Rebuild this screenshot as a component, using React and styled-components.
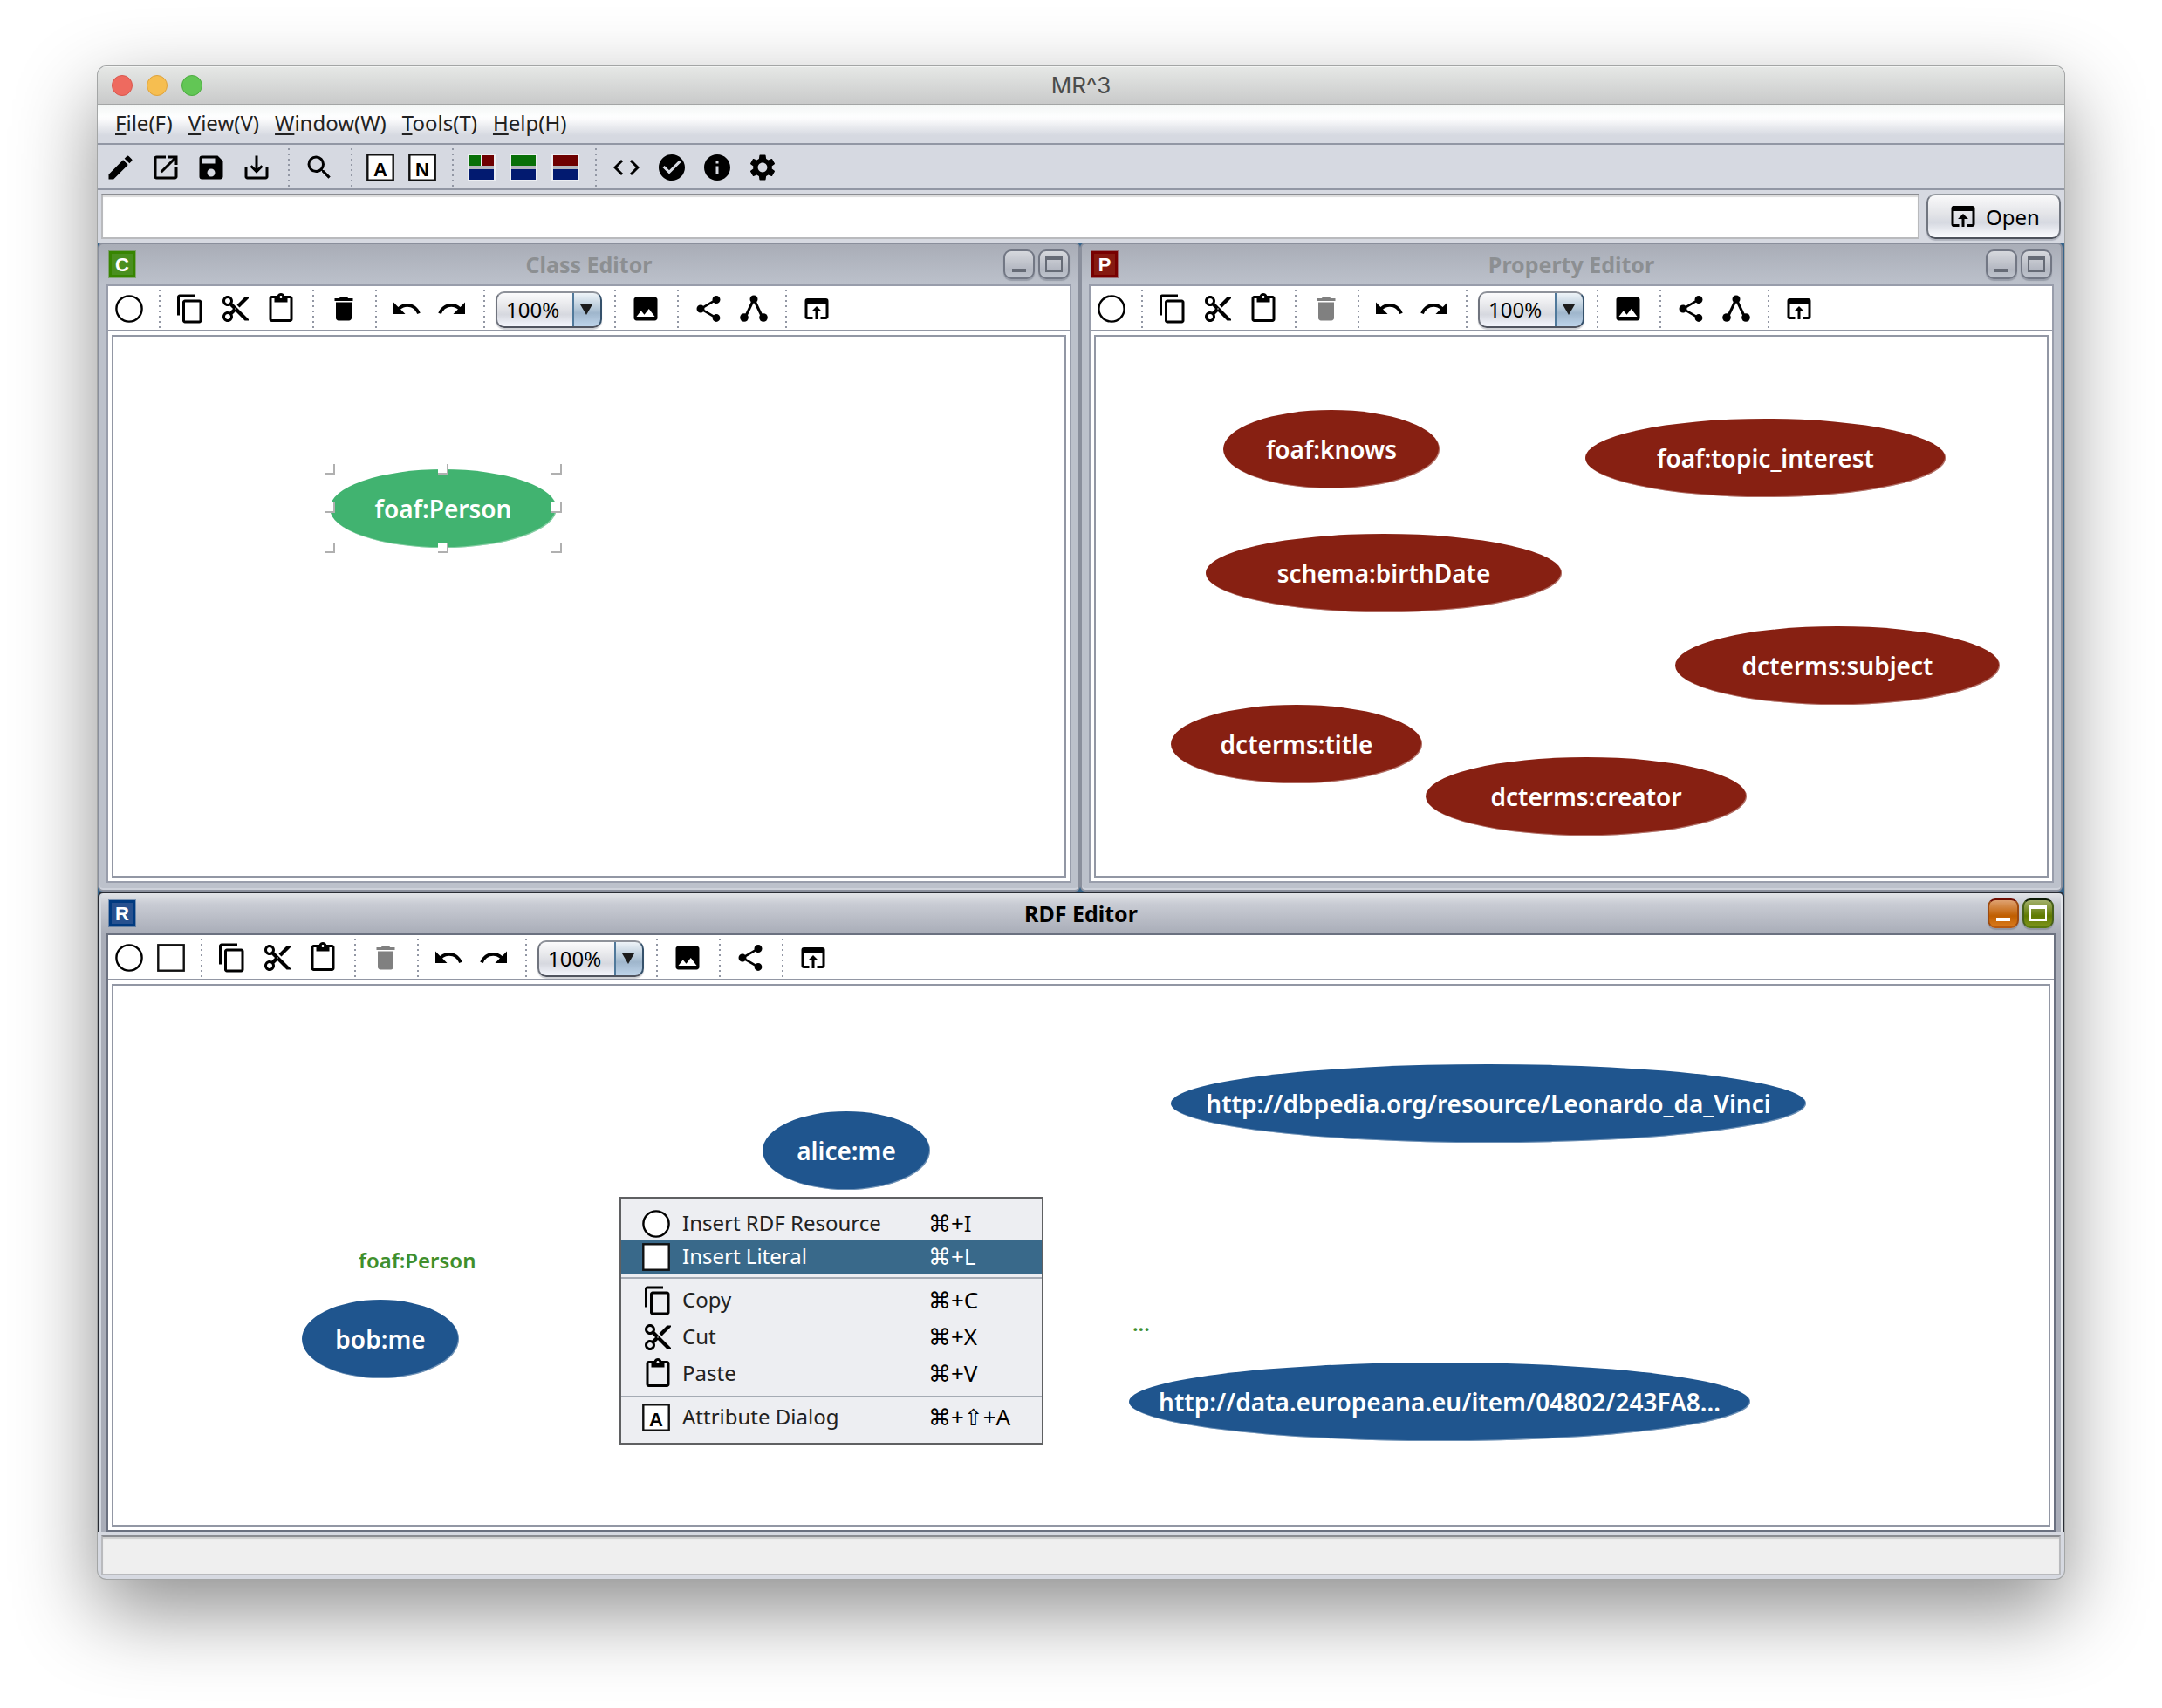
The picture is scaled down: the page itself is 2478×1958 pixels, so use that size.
import React from "react";
import styled, { createGlobalStyle, css } from "styled-components";
import {
  MdCheckCircle,
  MdCode,
  MdContentCopy,
  MdContentCut,
  MdContentPaste,
  MdDelete,
  MdEdit,
  MdImage,
  MdInfo,
  MdOpenInBrowser,
  MdOpenInNew,
  MdRedo,
  MdSave,
  MdSaveAlt,
  MdSearch,
  MdSettings,
  MdShare,
  MdUndo,
} from "react-icons/md";

const uiFont = '"Noto Sans", "Open Sans", "DejaVu Sans", sans-serif';
const line = "#9297a4";
const panel = "#d6d9e1";

const GlobalStyle = createGlobalStyle`
  *, *::before, *::after { box-sizing: border-box; }
  body { margin: 0; background: #fff; font-family: ${uiFont}; font-size: 24px; color: #000; }
  button, input, select { font: inherit; color: inherit; margin: 0; }
`;

const Page = styled.div`
  min-height: 100vh;
  padding: 76px 112px 148px;
  display: flex;
`;

const AppWindow = styled.main`
  flex: 1;
  min-width: 0;
  display: flex;
  flex-direction: column;
  background: ${panel};
  border-radius: 10px;
  overflow: hidden;
  box-shadow: 0 0 0 1px #a3a5a5, 0 36px 94px rgba(0, 0, 0, 0.45);
`;

const TitleBar = styled.header`
  height: 44px;
  flex: none;
  display: grid;
  grid-template-columns: 1fr auto 1fr;
  align-items: center;
  padding: 0 16px;
  background: linear-gradient(#e6e8e6, #c9caca);
  border-bottom: 1px solid #a3a5a5;
  box-shadow: inset 0 1px 0 #f3f4f3;
`;

const Lights = styled.div`
  display: flex;
  gap: 16px;
`;

const Light = styled.button`
  width: 24px;
  height: 24px;
  padding: 0;
  border-radius: 50%;
  border: 1px solid ${(p) => p.$edge};
  background: ${(p) => p.$fill};
`;

const AppTitle = styled.h1`
  margin: 0;
  font: 400 26px/32px Inter, Roboto, sans-serif;
  color: #4a4c4c;
`;

const MenuBar = styled.nav`
  height: 46px;
  flex: none;
  display: flex;
  align-items: center;
  gap: 18px;
  padding: 0 20px 2px;
  border-bottom: 2px solid ${line};
  background: linear-gradient(#f3f6f5, #fdfefe 30%, #fbfbfc 38%, ${panel} 80%);
`;

const MenuTitle = styled.button`
  padding: 0;
  border: 0;
  background: none;
  line-height: 32px;
  color: #222;

  u {
    text-underline-offset: 3px;
    text-decoration-thickness: 2px;
  }
`;

const ToolBar = styled.div`
  flex: none;
  height: 52px;
  display: flex;
  align-items: center;
  padding-top: 2px;
  border-bottom: 2px solid ${line};
  background: ${(p) => (p.$plain ? "#fff" : panel)};
`;

const ToolButton = styled.button`
  flex: none;
  height: 48px;
  padding: 0 8px;
  display: flex;
  align-items: center;
  border: 0;
  background: none;
  color: #000;

  &:disabled {
    color: #808080;
  }
`;

const Separator = styled.span`
  flex: none;
  width: 20px;
  height: 44px;
  background: repeating-linear-gradient(${line} 0 2px, transparent 2px 6px) 10px 0 / 2px 100% no-repeat;
`;

const ZoomBox = styled.label`
  flex: none;
  position: relative;
  margin: 2px 4px 0;
  width: 122px;
  height: 42px;
  border-radius: 10px;
  border: 2px solid;
  border-color: #8e929a #35516b #50545f #70747e;
  background:
    linear-gradient(#50799b, #50799b) 86px 0 / 2px 100% no-repeat,
    linear-gradient(#eef4f8, #b6c9d9 45%, #9fb6cc 60%, #bed4ea) 88px 0 / 32px 100% no-repeat,
    linear-gradient(#fbfbfc, #e3e4e8 45%, #d6d8df 65%, #f4f6fd);
  box-shadow: 0 2px 1px rgba(120, 125, 140, 0.35);

  svg {
    position: absolute;
    right: 9px;
    top: 12px;
    pointer-events: none;
  }
`;

const ZoomSelect = styled.select`
  appearance: none;
  width: 100%;
  height: 100%;
  padding: 0 0 0 10px;
  border: 0;
  background: none;
  line-height: 36px;
`;

const LocationBar = styled.form`
  height: 60px;
  flex: none;
  display: flex;
  gap: 8px;
  padding: 4px;
`;

const LocationField = styled.input`
  flex: 1;
  min-width: 0;
  padding: 0 8px;
  border: 2px solid #b9babd;
  border-top-color: #8b8d92;
  background: #fff;
  box-shadow: inset 0 2px 1px #dcdcdc;
`;

const OpenButton = styled.button`
  width: 154px;
  display: flex;
  align-items: center;
  justify-content: center;
  gap: 8px;
  padding: 0;
  border: 2px solid;
  border-color: #959aa0 #70757f #4d525c #70757f;
  border-radius: 10px;
  background: linear-gradient(#f9f9fa, #e3e4e8 45%, #d6d9e1 65%, #fbfcff);
  box-shadow: 0 2px 1px rgba(120, 125, 140, 0.4);
`;

const Desktop = styled.div`
  flex: 1;
  display: grid;
  grid-template-columns: 1fr 1fr;
  grid-template-rows: auto auto;
  background: #37648a;
`;

const TopFrames = styled.div`
  grid-column: 1 / -1;
  display: grid;
  grid-template-columns: 1fr 1fr;
  padding-right: 2px;
`;

const Frame = styled.section`
  display: flex;
  flex-direction: column;
  min-width: 0;
  padding: 0 8px 8px;
  border: 2px solid #8a8f9c;
  border-radius: 6px;
  background: linear-gradient(#a9adb7, #bcc1cb 46px);
  box-shadow: inset 0 -2px 0 #cdd1da;

  ${(p) =>
    p.$active &&
    css`
      grid-column: 1 / -1;
      padding-bottom: 0;
      border-color: #282b33;
      border-bottom: 0;
      border-radius: 6px 6px 0 0;
      background: linear-gradient(#e2e4e8, #c9ccd4 12px, #a9adb8 46px);
      box-shadow: inset 2px 0 0 #d3d8e0, inset -2px 0 0 #e3e6ea;
    `}
`;

const FrameHeader = styled.header`
  height: 46px;
  flex: none;
  display: grid;
  grid-template-columns: 1fr auto 1fr;
  align-items: center;
  padding: 0 2px;
`;

const FrameTitle = styled.h2`
  margin: 0;
  font-size: 25px;
  font-weight: 700;
  line-height: 32px;
  color: ${(p) => (p.$active ? "#000" : "#8c8f92")};
`;

const FrameControls = styled.div`
  display: flex;
  justify-content: flex-end;
  gap: 4px;
`;

const FrameControl = styled.button`
  width: 36px;
  height: 34px;
  padding: 0;
  display: flex;
  align-items: center;
  justify-content: center;
  border: 2px solid;
  border-color: ${(p) => p.$edge};
  border-radius: 9px;
  background: ${(p) => p.$fill};
  color: ${(p) => p.$ink};
  box-shadow: 0 2px 1px rgba(90, 95, 110, 0.35);
`;

const FrameBody = styled.div`
  flex: 1;
  display: flex;
  flex-direction: column;
  border: 2px solid ${(p) => (p.$active ? "#6b7180" : "#989dab")};
  background: #fff;
`;

const Canvas = styled.div`
  position: relative;
  flex: 1;
  min-height: 622px;
  margin: 4px;
  border: 2px solid ${line};
  overflow: hidden;
`;

const Node = styled.div`
  position: absolute;
  left: ${(p) => p.$x}px;
  top: ${(p) => p.$y}px;
  width: ${(p) => p.$w}px;
  height: 90px;
  display: flex;
  align-items: center;
  justify-content: center;
  border-radius: 50%;
  background: ${(p) => p.$fill};
  box-shadow: inset -1px -1px 0 rgba(255, 255, 255, 0.35);
  color: #fff;
  font-size: 28px;
  font-weight: 600;
  line-height: 38px;
  white-space: nowrap;
`;

const Handle = styled.span`
  position: absolute;
  left: ${(p) => p.$x}px;
  top: ${(p) => p.$y}px;
  width: 12px;
  height: 12px;
  background: #fff;
  border: solid #b0b0b0;
  border-width: 0 2px 2px 0;
`;

const TypeLabel = styled.span`
  position: absolute;
  left: ${(p) => p.$x}px;
  top: ${(p) => p.$y}px;
  font-size: 24px;
  font-weight: 600;
  line-height: 32px;
  color: #3f8f2c;
`;

const ContextMenu = styled.div`
  position: absolute;
  left: 580px;
  top: 242px;
  width: 486px;
  padding: 10px 0;
  border: 2px solid #5f6062;
  background: #edeef2;
`;

const MenuItem = styled.button`
  width: 100%;
  height: ${(p) => (p.$tall ? 42 : 38)}px;
  padding: 0 24px;
  display: grid;
  grid-template-columns: 46px 282px 1fr;
  align-items: center;
  border: 0;
  background: ${(p) => (p.$selected ? "#39698a" : "none")};
  color: ${(p) => (p.$selected ? "#fff" : "#222")};
  text-align: left;
  line-height: 32px;

  svg {
    color: #000;
  }
`;

const MenuLabel = styled.span`
  padding-bottom: 2px;
`;

const Shortcut = styled.kbd`
  padding-bottom: 2px;
  font: 400 26px/32px "Noto Sans", "DejaVu Sans", sans-serif;
  white-space: nowrap;
  color: ${(p) => (p.$selected ? "#fff" : "#000")};
`;

const MenuRule = styled.hr`
  height: 2px;
  margin: 4px 0;
  border: 0;
  background: #a5abb4;
`;

const StatusBar = styled.footer`
  flex: none;
  padding: 4px;
`;

const StatusField = styled.input`
  display: block;
  width: 100%;
  height: 46px;
  padding: 0 8px;
  border: 2px solid #b9babd;
  border-top-color: #8b8d92;
  background: #efefef;
  box-shadow: inset 0 2px 1px #cfcfcf;
`;

const CircleIcon = () => (
  <svg width="32" height="32" viewBox="0 0 32 32" aria-hidden="true">
    <circle cx="16" cy="16" r="14.6" fill="#fff" stroke="#000" strokeWidth="2.4" />
  </svg>
);

const BoxIcon = ({ letter }) => (
  <svg width="32" height="32" viewBox="0 0 32 32" aria-hidden="true">
    <rect x="1.3" y="1.3" width="29.4" height="29.4" fill="#fff" stroke="#111" strokeWidth="2.4" />
    {letter && (
      <text x="16" y="26" textAnchor="middle" fontFamily='"Liberation Sans", Arial, sans-serif' fontWeight="700" fontSize="22">
        {letter}
      </text>
    )}
  </svg>
);

const TreeIcon = () => (
  <svg width="36" height="36" viewBox="0 0 36 36" aria-hidden="true">
    <path d="M18 7 8 28M18 7l10 21" fill="none" stroke="#000" strokeWidth="3" />
    <circle cx="18" cy="7" r="4.5" />
    <circle cx="7" cy="28" r="4.8" />
    <circle cx="29" cy="28" r="4.8" />
  </svg>
);

const LayoutIcon = ({ left, right }) => (
  <svg width="32" height="32" viewBox="0 0 32 32" aria-hidden="true">
    <rect width="32" height="32" fill="#eceef2" />
    <rect x="2" y="14" width="28" height="4" fill="#b4b7bd" />
    {right ? (
      <>
        <rect x="2" y="2" width="13" height="12" fill={left} />
        <rect x="17" y="2" width="13" height="12" fill={right} />
      </>
    ) : (
      <rect x="2" y="2" width="28" height="12" fill={left} />
    )}
    <rect x="2" y="18" width="28" height="12" fill="#021a70" />
  </svg>
);

const Badge = ({ letter, fill, edge }) => (
  <svg width="32" height="32" viewBox="0 0 32 32" aria-hidden="true">
    <rect width="32" height="32" fill={edge} opacity="0.4" />
    <rect x="1" y="1" width="30" height="30" fill={edge} />
    <rect x="4" y="4" width="24" height="24" fill={fill} />
    <text x="16" y="24" textAnchor="middle" fill="#fff" fontFamily='"Liberation Sans", Arial, sans-serif' fontWeight="700" fontSize="22">
      {letter}
    </text>
  </svg>
);

const MinimizeIcon = () => (
  <svg width="32" height="30" viewBox="0 0 32 30" fill="currentColor" aria-hidden="true">
    <rect x="8" y="20" width="16" height="4" />
  </svg>
);

const MaximizeIcon = () => (
  <svg width="32" height="30" viewBox="0 0 32 30" fill="currentColor" aria-hidden="true">
    <path d="M6 6h20v18H6zM8 10v12h16V10z" fillRule="evenodd" />
  </svg>
);

const tool = {
  pencil: ["Edit", MdEdit],
  launch: ["Open", MdOpenInNew],
  save: ["Save", MdSave],
  export: ["Save as", MdSaveAlt],
  find: ["Find", MdSearch],
  code: ["Source", MdCode],
  check: ["Validate", MdCheckCircle],
  info: ["Info", MdInfo],
  gear: ["Preferences", MdSettings],
  copy: ["Copy", MdContentCopy],
  cut: ["Cut", MdContentCut],
  paste: ["Paste", MdContentPaste],
  trash: ["Delete", MdDelete],
  undo: ["Undo", MdUndo],
  redo: ["Redo", MdRedo],
  image: ["Save image", MdImage],
  share: ["Layout left to right", MdShare],
  tree: ["Layout top to bottom", TreeIcon],
  open: ["Open in browser", MdOpenInBrowser],
  circle: ["Insert resource", CircleIcon],
  square: ["Insert literal", BoxIcon],
  A: ["Attribute dialog", () => <BoxIcon letter="A" />],
  N: ["Namespace table", () => <BoxIcon letter="N" />],
  layoutAll: ["All editors", () => <LayoutIcon left="#087008" right="#6e0000" />],
  layoutClass: ["Class and RDF editors", () => <LayoutIcon left="#087008" />],
  layoutProperty: ["Property and RDF editors", () => <LayoutIcon left="#6e0000" />],
};

function Tools({ items, disabled = [] }) {
  return items.map((name, i) => {
    if (name === "|") return <Separator key={i} />;
    if (name === "zoom") return <Zoom key={i} />;
    const [label, Icon] = tool[name];
    return (
      <ToolButton key={i} type="button" aria-label={label} disabled={disabled.includes(name)}>
        <Icon size={36} />
      </ToolButton>
    );
  });
}

function Zoom() {
  return (
    <ZoomBox>
      <ZoomSelect aria-label="Zoom" defaultValue="100%">
        <option>50%</option>
        <option>100%</option>
        <option>200%</option>
      </ZoomSelect>
      <svg width="14" height="14" viewBox="0 0 14 14" aria-hidden="true">
        <path d="M0 1h14L7 13z" fill="#1c1c1c" />
      </svg>
    </ZoomBox>
  );
}

const idleControl = {
  $edge: "#727784",
  $fill: "linear-gradient(#d6d8dd, #b3b7c1 70%, #bfc4cd)",
  $ink: "#666b76",
};
const orangeControl = {
  $edge: "#6e0c00 #9c4a10 #b85a10",
  $fill: "linear-gradient(#dfa271, #c05e00 60%, #d87a1c)",
  $ink: "#fff",
};
const greenControl = {
  $edge: "#0c1a04 #47601a #5a7a10",
  $fill: "linear-gradient(#a3b06c, #5f7a00 60%, #7d931c)",
  $ink: "#fff",
};

function EditorFrame({ title, badge, active, tools, disabled, children }) {
  return (
    <Frame $active={active} aria-label={title}>
      <FrameHeader>
        {badge}
        <FrameTitle $active={active}>{title}</FrameTitle>
        <FrameControls>
          <FrameControl type="button" aria-label="Minimize" {...(active ? orangeControl : idleControl)}>
            <MinimizeIcon />
          </FrameControl>
          <FrameControl type="button" aria-label="Maximize" {...(active ? greenControl : idleControl)}>
            <MaximizeIcon />
          </FrameControl>
        </FrameControls>
      </FrameHeader>
      <FrameBody $active={active}>
        <ToolBar $plain>
          <Tools items={tools} disabled={disabled} />
        </ToolBar>
        <Canvas>{children}</Canvas>
      </FrameBody>
    </Frame>
  );
}

const schemaTools = ["circle", "|", "copy", "cut", "paste", "|", "trash", "|", "undo", "redo", "|", "zoom", "|", "image", "|", "share", "tree", "|", "open"];
const rdfTools = ["circle", "square", "|", "copy", "cut", "paste", "|", "trash", "|", "undo", "redo", "|", "zoom", "|", "image", "|", "share", "|", "open"];

const handles = [
  [242, 146], [372, 146], [502, 146],
  [242, 190], [502, 190],
  [242, 236], [372, 236], [502, 236],
];

const properties = [
  ["foaf:knows", 146, 84, 248],
  ["foaf:topic_interest", 561, 94, 413],
  ["schema:birthDate", 126, 226, 408],
  ["dcterms:subject", 664, 332, 372],
  ["dcterms:title", 86, 422, 288],
  ["dcterms:creator", 378, 482, 368],
];

const resources = [
  ["alice:me", 744, 144, 192],
  ["bob:me", 216, 360, 180],
  ["http://dbpedia.org/resource/Leonardo_da_Vinci", 1212, 90, 728],
  ["http://data.europeana.eu/item/04802/243FA8...", 1164, 432, 712],
];

const menus = ["File(F)", "View(V)", "Window(W)", "Tools(T)", "Help(H)"];

const contextItems = [
  { icon: <CircleIcon />, label: "Insert RDF Resource", keys: "⌘+I" },
  { icon: <BoxIcon />, label: "Insert Literal", keys: "⌘+L", selected: true },
  null,
  { icon: <MdContentCopy size={36} />, label: "Copy", keys: "⌘+C", tall: true },
  { icon: <MdContentCut size={36} />, label: "Cut", keys: "⌘+X", tall: true },
  { icon: <MdContentPaste size={36} />, label: "Paste", keys: "⌘+V", tall: true },
  null,
  { icon: <BoxIcon letter="A" />, label: "Attribute Dialog", keys: "⌘+⇧+A" },
];

export default function App() {
  return (
    <Page>
      <GlobalStyle />
      <AppWindow>
        <TitleBar>
          <Lights>
            <Light aria-label="Close" $fill="#ee6a5f" $edge="#d9574d" />
            <Light aria-label="Minimize" $fill="#f6be50" $edge="#dda23c" />
            <Light aria-label="Zoom" $fill="#62c655" $edge="#4cab40" />
          </Lights>
          <AppTitle>MR^3</AppTitle>
        </TitleBar>

        <MenuBar aria-label="Main menu">
          {menus.map((name) => (
            <MenuTitle key={name} type="button">
              <u>{name[0]}</u>
              {name.slice(1)}
            </MenuTitle>
          ))}
        </MenuBar>

        <ToolBar>
          <Tools
            items={["pencil", "launch", "save", "export", "|", "find", "|", "A", "N", "|", "layoutAll", "layoutClass", "layoutProperty", "|", "code", "check", "info", "gear"]}
          />
        </ToolBar>

        <LocationBar onSubmit={(e) => e.preventDefault()}>
          <LocationField type="text" aria-label="Location" />
          <OpenButton type="submit">
            <MdOpenInBrowser size={36} />
            Open
          </OpenButton>
        </LocationBar>

        <Desktop>
          <TopFrames>
            <EditorFrame title="Class Editor" badge={<Badge letter="C" fill="#4a8f1f" edge="#378500" />} tools={schemaTools}>
              <Node $x={248} $y={152} $w={260} $fill="#41b370">
                foaf:Person
              </Node>
              {handles.map(([x, y]) => (
                <Handle key={`${x}-${y}`} $x={x} $y={y} />
              ))}
            </EditorFrame>
            <EditorFrame title="Property Editor" badge={<Badge letter="P" fill="#861a10" edge="#780000" />} tools={schemaTools} disabled={["trash"]}>
              {properties.map(([name, x, y, w]) => (
                <Node key={name} $x={x} $y={y} $w={w} $fill="#872012">
                  {name}
                </Node>
              ))}
            </EditorFrame>
          </TopFrames>

          <EditorFrame active title="RDF Editor" badge={<Badge letter="R" fill="#28518f" edge="#003a80" />} tools={rdfTools} disabled={["trash"]}>
            {resources.map(([name, x, y, w]) => (
              <Node key={name} $x={x} $y={y} $w={w} $fill="#1f558e">
                {name}
              </Node>
            ))}
            <TypeLabel $x={281} $y={299}>foaf:Person</TypeLabel>
            <TypeLabel $x={1168} $y={371}>...</TypeLabel>
            <ContextMenu role="menu" aria-label="Edit">
              {contextItems.map((item, i) =>
                item ? (
                  <MenuItem key={item.label} type="button" role="menuitem" $tall={item.tall} $selected={item.selected}>
                    {item.icon}
                    <MenuLabel>{item.label}</MenuLabel>
                    <Shortcut $selected={item.selected}>{item.keys}</Shortcut>
                  </MenuItem>
                ) : (
                  <MenuRule key={i} />
                )
              )}
            </ContextMenu>
          </EditorFrame>
        </Desktop>

        <StatusBar>
          <StatusField type="text" readOnly aria-label="Status" />
        </StatusBar>
      </AppWindow>
    </Page>
  );
}
